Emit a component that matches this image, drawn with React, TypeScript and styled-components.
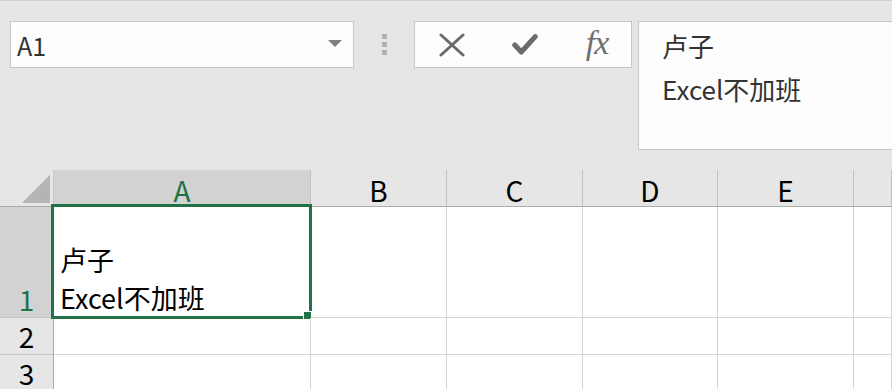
import React from 'react';
import styled, { createGlobalStyle } from 'styled-components';

const FONT = `"Noto Sans CJK SC", "Noto Sans", sans-serif`;
const GREEN = '#217346';

const GlobalStyle = createGlobalStyle`
  html, body {
    margin: 0;
    padding: 0;
    background: #e6e6e6;
    overflow: hidden;
  }
`;

const Page = styled.div`
  width: 892px;
  height: 389px;
  overflow: hidden;
  border-top: 1px solid #d0d0d0;
  box-sizing: border-box;
  font-family: ${FONT};
`;

const FormulaArea = styled.div`
  height: 169px;
  display: flex;
  align-items: flex-start;
  padding: 20px 0 0 10px;
  box-sizing: border-box;
`;

const NameBox = styled.div`
  width: 344px;
  height: 47px;
  box-sizing: border-box;
  background: #fdfdfd;
  border: 1px solid #c6c6c6;
  display: flex;
  align-items: center;
  justify-content: space-between;
  padding: 0 11px 0 6px;
  font-size: 25px;
  color: #333;
`;

const Arrow = styled.span`
  width: 0;
  height: 0;
  border-left: 7px solid transparent;
  border-right: 7px solid transparent;
  border-top: 7px solid #808080;
  margin-top: -3px;
`;

const Grip = styled.div`
  width: 60px;
  height: 47px;
  display: flex;
  flex-direction: column;
  align-items: center;
  justify-content: center;
  gap: 3px;
`;

const GripDot = styled.span`
  width: 5px;
  height: 5px;
  background: #b4b4b4;
`;

const FxBox = styled.div`
  width: 218px;
  height: 47px;
  box-sizing: border-box;
  background: #fdfdfd;
  border: 1px solid #c6c6c6;
  display: flex;
  align-items: center;
  padding-left: 24px;
  gap: 47px;
`;

const IconSlot = styled.div`
  width: 26px;
  height: 24px;
  display: flex;
  align-items: center;
  justify-content: center;
`;

const FxText = styled.span`
  font-family: "Liberation Serif", "DejaVu Serif", serif;
  font-style: italic;
  font-size: 34px;
  color: #6e6e6e;
  line-height: 1;
  margin-top: -3px;
  margin-left: -2px;
  letter-spacing: -1px;
`;

const FormulaInput = styled.div`
  flex: 1;
  margin-left: 6px;
  margin-right: -20px;
  height: 129px;
  box-sizing: border-box;
  background: #fdfdfd;
  border: 1px solid #c6c6c6;
  padding: 3px 0 0 23px;
  font-size: 26px;
  line-height: 42.5px;
  color: #333;
`;

const Sheet = styled.div`
  display: grid;
  grid-template-columns: 54px 257px 136px 136px 135px 136px 1fr;
  grid-template-rows: 37px 111px 37px 37px;
  background: #fff;
`;

const Corner = styled.div`
  background: #e6e6e6;
  border-right: 1px solid #c6c6c6;
  border-bottom: 1px solid #ababab;
  position: relative;
  box-sizing: border-box;
`;

const CornerTriangle = styled.div`
  position: absolute;
  left: 22px;
  top: 5px;
  width: 0;
  height: 0;
  border-left: 28px solid transparent;
  border-bottom: 28px solid #b4b4b4;
`;

const ColHead = styled.div<{ $active?: boolean }>`
  background: ${({ $active }) => ($active ? '#d2d2d2' : '#e6e6e6')};
  color: ${({ $active }) => ($active ? GREEN : '#000')};
  border-right: 1px solid #c0c0c0;
  border-bottom: 1px solid #ababab;
  box-sizing: border-box;
  display: flex;
  align-items: center;
  justify-content: center;
  font-size: 28px;
  padding-top: 3px;
`;

const RowHead = styled.div<{ $active?: boolean }>`
  background: ${({ $active }) => ($active ? '#d2d2d2' : '#e6e6e6')};
  color: ${({ $active }) => ($active ? GREEN : '#000')};
  border-right: 1px solid #ababab;
  border-bottom: 1px solid #c6c6c6;
  box-sizing: border-box;
  display: flex;
  align-items: flex-end;
  justify-content: center;
  font-size: 28px;
  line-height: 36px;
`;

const Cell = styled.div`
  border-right: 1px solid #d4d4d4;
  border-bottom: 1px solid #d4d4d4;
  box-sizing: border-box;
  position: relative;
  display: flex;
  flex-direction: column;
  justify-content: flex-end;
  padding: 0 0 0 6px;
  font-size: 27px;
  line-height: 38px;
  color: #000;
`;

const Selection = styled.div`
  position: absolute;
  left: -3px;
  top: -3px;
  right: -2px;
  bottom: -2px;
  border: 3px solid ${GREEN};
  pointer-events: none;
`;

const FillHandle = styled.div`
  position: absolute;
  right: -2px;
  bottom: -3px;
  width: 7px;
  height: 7px;
  background: ${GREEN};
  border: 1px solid #fff;
`;

const CellLine = styled.div`
  white-space: nowrap;
`;

const columns = ['A', 'B', 'C', 'D', 'E', ''];

const App: React.FC = () => {
  const rows = [1, 2, 3];

  return (
    <Page>
      <GlobalStyle />
      <FormulaArea>
        <NameBox>
          <span>A1</span>
          <Arrow />
        </NameBox>
        <Grip>
          <GripDot />
          <GripDot />
          <GripDot />
        </Grip>
        <FxBox>
          <IconSlot>
            <svg width="26" height="24" viewBox="0 0 26 24">
              <path
                d="M2 2 L24 22 M24 2 L2 22"
                stroke="#6b6b6b"
                strokeWidth="3"
                strokeLinecap="round"
                fill="none"
              />
            </svg>
          </IconSlot>
          <IconSlot>
            <svg width="28" height="24" viewBox="0 0 28 24">
              <path
                d="M3 12 L10 19.5 L25 3"
                stroke="#6b6b6b"
                strokeWidth="5.5"
                strokeLinecap="round"
                strokeLinejoin="round"
                fill="none"
              />
            </svg>
          </IconSlot>
          <IconSlot>
            <FxText>fx</FxText>
          </IconSlot>
        </FxBox>
        <FormulaInput>
          <div>卢子</div>
          <div>Excel不加班</div>
        </FormulaInput>
      </FormulaArea>
      <Sheet>
        <Corner>
          <CornerTriangle />
        </Corner>
        {columns.map((c, i) => (
          <ColHead key={`h${i}`} $active={c === 'A'}>
            {c}
          </ColHead>
        ))}
        {rows.map((r) => (
          <React.Fragment key={r}>
            <RowHead $active={r === 1}>{r}</RowHead>
            {columns.map((c, i) =>
              r === 1 && c === 'A' ? (
                <Cell key={`${r}${i}`}>
                  <CellLine>卢子</CellLine>
                  <CellLine>Excel不加班</CellLine>
                  <Selection />
                  <FillHandle />
                </Cell>
              ) : (
                <Cell key={`${r}${i}`} />
              )
            )}
          </React.Fragment>
        ))}
      </Sheet>
    </Page>
  );
};

export default App;
